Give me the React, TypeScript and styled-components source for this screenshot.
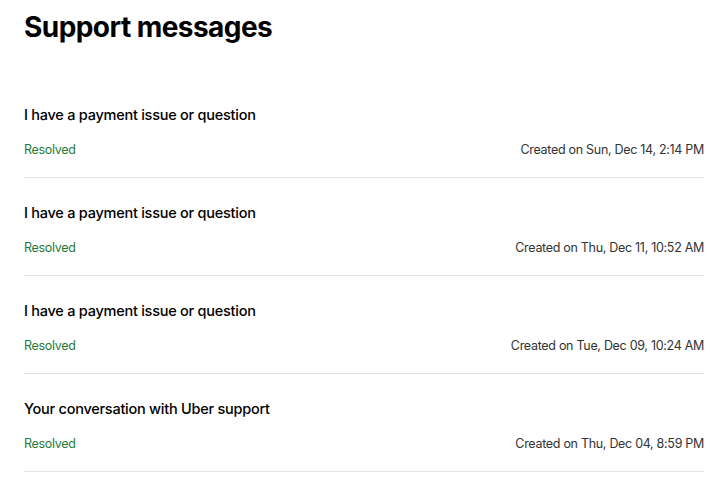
import React from 'react';
import styled, { createGlobalStyle } from 'styled-components';

const GlobalStyle = createGlobalStyle`
  body {
    margin: 0;
    background: #ffffff;
    font-family: Inter, "Noto Sans", "Liberation Sans", sans-serif;
    color: #000000;
  }
`;

const Page = styled.main`
  padding: 0 23px 0 24px;
`;

const Title = styled.h1`
  margin: 0;
  padding-top: 9px;
  height: 71px;
  font-size: 28px;
  line-height: 36px;
  font-weight: 700;
  letter-spacing: -0.55px;
`;

const List = styled.ul`
  list-style: none;
  margin: 0;
  padding: 0;
`;

const Row = styled.li`
  padding: 25px 0 17px;
  border-bottom: 1px solid #e2e2e2;
`;

const RowTitle = styled.div`
  font-size: 14.5px;
  line-height: 20px;
  font-weight: 500;
  letter-spacing: -0.25px;
  color: #000000;
`;

const Meta = styled.div`
  display: flex;
  justify-content: space-between;
  align-items: center;
  margin-top: 15px;
  font-size: 12.5px;
  line-height: 20px;
  letter-spacing: -0.3px;
`;

const Status = styled.span`
  color: #1f7a3a;
`;

const DateText = styled.span`
  color: #333333;
`;

const messages = [
  { title: 'I have a payment issue or question', date: 'Sun, Dec 14, 2:14 PM' },
  { title: 'I have a payment issue or question', date: 'Thu, Dec 11, 10:52 AM' },
  { title: 'I have a payment issue or question', date: 'Tue, Dec 09, 10:24 AM' },
  { title: 'Your conversation with Uber support', date: 'Thu, Dec 04, 8:59 PM' },
];

export default function App() {
  return (
    <>
      <GlobalStyle />
      <Page>
        <Title>Support messages</Title>
        <List>
          {messages.map((m, i) => (
            <Row key={i}>
              <RowTitle>{m.title}</RowTitle>
              <Meta>
                <Status>Resolved</Status>
                <DateText>Created on {m.date}</DateText>
              </Meta>
            </Row>
          ))}
        </List>
      </Page>
    </>
  );
}
